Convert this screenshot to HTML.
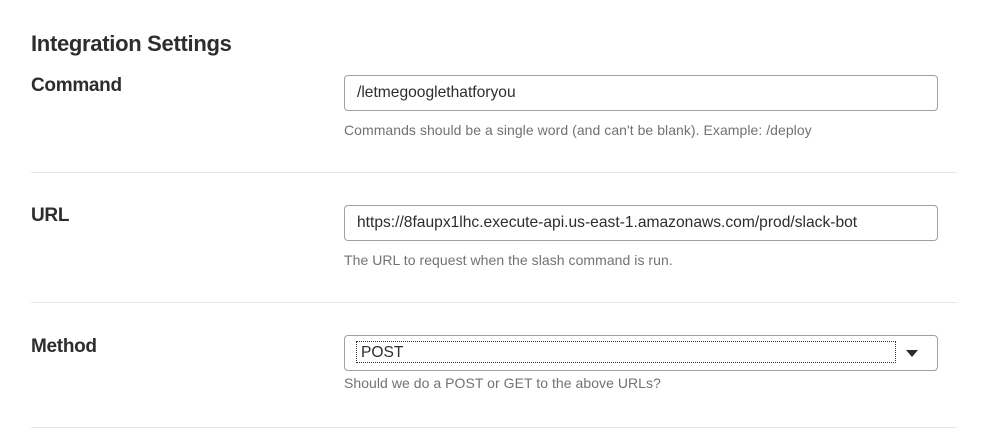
<!DOCTYPE html>
<html><head><style>
body{margin:0;background:#fff;font-family:"Liberation Sans",sans-serif;color:#2c2d30;width:989px;height:444px;overflow:hidden;position:relative}
.a{position:absolute}
h1{position:absolute;left:31px;top:31px;margin:0;font-size:22px;font-weight:bold;letter-spacing:-0.3px}
.lbl{position:absolute;left:31px;font-size:19px;font-weight:bold;letter-spacing:-0.3px}
.inp{position:absolute;left:344px;height:34px;border:1px solid #a0a0a2;border-radius:4px;font-size:15.6px;line-height:34px;box-sizing:content-box;padding-left:12px;width:580px;color:#2c2d30}
.help{position:absolute;left:344px;font-size:14px;color:#717274;letter-spacing:0.05px}
.hr{position:absolute;left:31px;width:926px;height:1px;background:#e8e8e8}
</style></head><body>
<h1>Integration Settings</h1>
<div class="lbl" style="top:75px">Command</div>
<div class="inp" style="top:75px">/letmegooglethatforyou</div>
<div class="help" style="top:122px">Commands should be a single word (and can't be blank). Example: /deploy</div>
<div class="hr" style="top:172px"></div>
<div class="lbl" style="top:205px">URL</div>
<div class="inp" style="top:205px">https://8faupx1lhc.execute-api.us-east-1.amazonaws.com/prod/slack-bot</div>
<div class="help" style="top:252px">The URL to request when the slash command is run.</div>
<div class="hr" style="top:302px"></div>
<div class="lbl" style="top:336px">Method</div>
<div class="inp" style="top:335px;height:34px;padding-left:0;width:592px"></div>
<div class="a" style="left:356px;top:341px;width:540px;height:22px;border:1px dotted #333;font-size:15.6px;line-height:21px;padding-left:4px;box-sizing:border-box">POST</div>
<div class="a" style="left:906px;top:350px;width:0;height:0;border-left:6px solid transparent;border-right:6px solid transparent;border-top:7px solid #2c2d30"></div>
<div class="help" style="top:375px">Should we do a POST or GET to the above URLs?</div>
<div class="hr" style="top:427px"></div>
</body></html>
